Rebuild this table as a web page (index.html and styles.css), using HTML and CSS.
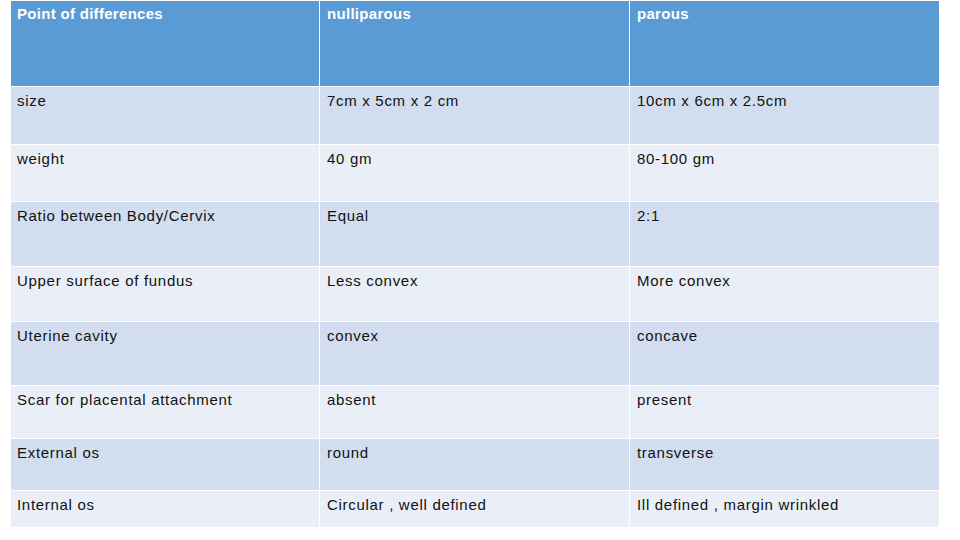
FILE: index.html
```html
<!DOCTYPE html>
<html>
<head>
<meta charset="utf-8">
<link rel="stylesheet" href="styles.css">
</head>
<body>
<div class="table">
  <div class="cell head">Point of differences</div>
  <div class="cell head">nulliparous</div>
  <div class="cell head">parous</div>

  <div class="cell odd">size</div>
  <div class="cell odd">7cm x 5cm x 2 cm</div>
  <div class="cell odd">10cm x 6cm x 2.5cm</div>

  <div class="cell even">weight</div>
  <div class="cell even">40 gm</div>
  <div class="cell even">80-100 gm</div>

  <div class="cell odd">Ratio between Body/Cervix</div>
  <div class="cell odd">Equal</div>
  <div class="cell odd">2:1</div>

  <div class="cell even">Upper surface of fundus</div>
  <div class="cell even">Less convex</div>
  <div class="cell even">More convex</div>

  <div class="cell odd">Uterine cavity</div>
  <div class="cell odd">convex</div>
  <div class="cell odd">concave</div>

  <div class="cell even">Scar for placental attachment</div>
  <div class="cell even">absent</div>
  <div class="cell even">present</div>

  <div class="cell odd">External os</div>
  <div class="cell odd">round</div>
  <div class="cell odd">transverse</div>

  <div class="cell even">Internal os</div>
  <div class="cell even">Circular , well defined</div>
  <div class="cell even">Ill defined , margin wrinkled</div>
</div>
</body>
</html>
```
FILE: styles.css
```css
html, body {
  margin: 0;
  padding: 0;
  background: #ffffff;
}
body {
  padding: 1px 0 0 11px;
  font-family: "Liberation Sans", Arial, sans-serif;
  font-size: 15px;
  letter-spacing: 0.7px;
  color: #111;
}
.table {
  display: grid;
  grid-template-columns: 308px 309px 309px;
  grid-template-rows: 85px 57px 56px 64px 54px 63px 52px 51px 36px;
  gap: 1px;
  width: 928px;
  background: #ffffff;
}
.cell {
  padding: 5px 7px 0 7px;
  line-height: 18px;
}
.cell:nth-child(3n+1) {
  padding-left: 6px;
}
.head {
  background: #5b9bd5;
  color: #ffffff;
  font-weight: bold;
  letter-spacing: 0.3px;
  padding-top: 4px;
}
.odd {
  background: #d2deef;
}
.even {
  background: #eaeff7;
}
```
